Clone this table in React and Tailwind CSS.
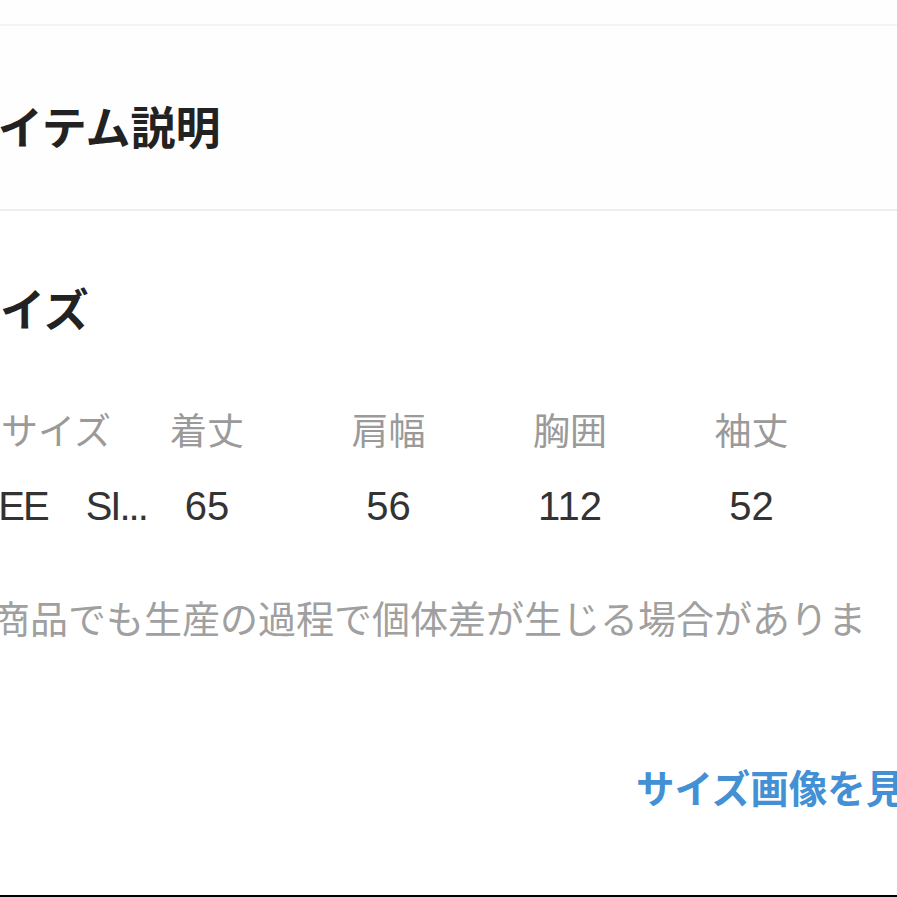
import React from "react";

const FONT = { fontFamily: '"Liberation Sans", "Noto Sans CJK JP", sans-serif' };

const headers = ["着丈", "肩幅", "胸囲", "袖丈", "裾幅"];
const values = ["65", "56", "112", "52", ""];

export default function App() {
  return (
    <div
      className="w-[897px] h-[897px] overflow-hidden bg-white flex flex-col"
      style={FONT}
    >
      <div className="h-[24px] shrink-0 bg-[#fefefe]" />
      <div className="h-[2px] shrink-0 bg-[#f4f4f4]" />

      <div className="h-[183px] shrink-0 pt-[81px] bg-[#fefefe]">
        <h2 className="ml-[-45px] text-[45px] leading-none font-bold text-[#222222] whitespace-nowrap">
          アイテム説明
        </h2>
      </div>
      <div className="h-[2px] shrink-0 bg-[#ededed]" />

      <h2 className="mt-[78px] ml-[-45px] text-[45px] leading-none font-bold text-[#222222] whitespace-nowrap">
        サイズ
      </h2>

      <div className="mt-[80px] ml-[-56px] flex gap-[103.5px] h-[37px] items-center text-[37px] leading-none text-[#9a9a9a] whitespace-nowrap">
        <div className="w-[224px] mr-[-103.5px] shrink-0 text-center">サイズ</div>
        {headers.map((h) => (
          <div key={h} className="w-[78px] shrink-0 text-center">
            {h}
          </div>
        ))}
      </div>

      <div className="mt-[34px] ml-[-56px] flex gap-[103.5px] h-[41px] items-center text-[40px] leading-none text-[#333333] whitespace-nowrap">
        <div className="w-[224px] mr-[-103.5px] shrink-0 pl-[5px] text-left tracking-[-2px]">
          FREE　SI...
        </div>
        {values.map((v, i) => (
          <div key={i} className="w-[78px] shrink-0 text-center">
            {v}
          </div>
        ))}
      </div>

      <p className="mt-[62px] ml-[-84px] w-[960px] shrink-0 text-[38px] leading-[64px] text-[#a0a0a0]">
        同じ商品でも生産の過程で個体差が生じる場合があります。
      </p>

      <div className="mt-[55px] pl-[636px] h-[38px] flex items-center whitespace-nowrap text-[38.5px] leading-none font-semibold text-[#4390d4]">
        サイズ画像を見る
      </div>

      <div className="mt-auto h-[2px] shrink-0 bg-black" />
    </div>
  );
}
